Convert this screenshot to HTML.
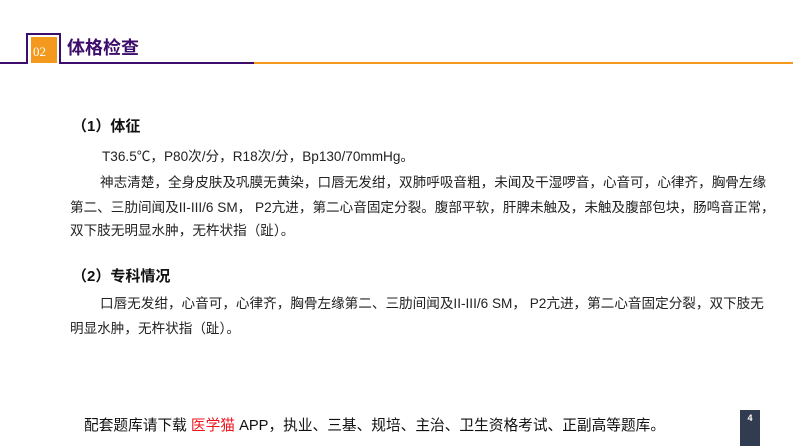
<!DOCTYPE html>
<html><head><meta charset="utf-8">
<style>
body{margin:0;width:793px;height:446px;background:#fff;position:relative;overflow:hidden;font-family:"Liberation Sans","Noto Sans CJK SC",sans-serif;color:#222;}
.a{position:absolute;white-space:nowrap;line-height:20px;}
.t{font-size:13.6px;}
.h{font-size:15px;font-weight:bold;color:#111;}
</style></head><body>
<div style="position:absolute;left:0;top:62px;width:254px;height:2px;background:#3d0d6b"></div>
<div style="position:absolute;left:254px;top:62px;width:539px;height:2px;background:#f39a1e"></div>
<div style="position:absolute;left:26px;top:33px;width:31px;height:29px;border:2px solid #3d0d6b;border-bottom:none;background:#fff"></div>
<div style="position:absolute;left:31px;top:37px;width:26px;height:26px;background:#f39a1e;color:#fff;font-family:'Liberation Serif',serif;font-size:13px;line-height:30px;text-align:left;padding-left:2px;box-sizing:border-box">02</div>
<div class="a" style="left:67px;top:37px;font-size:18px;font-weight:bold;color:#3d0d6b;line-height:22px">体格检查</div>

<div class="a h" style="left:72px;top:117px">（1）体征</div>
<div class="a t" style="left:102px;top:147px">T36.5℃，P80次/分，R18次/分，Bp130/70mmHg。</div>
<div class="a t" style="left:100px;top:173px">神志清楚，全身皮肤及巩膜无黄染，口唇无发绀，双肺呼吸音粗，未闻及干湿啰音，心音可，心律齐，胸骨左缘</div>
<div class="a t" style="left:70px;top:198px">第二、三肋间闻及II-III/6 SM， P2亢进，第二心音固定分裂。腹部平软，肝脾未触及，未触及腹部包块，肠鸣音正常，</div>
<div class="a t" style="left:70px;top:221px">双下肢无明显水肿，无杵状指（趾）。</div>

<div class="a h" style="left:72px;top:267px">（2）专科情况</div>
<div class="a t" style="left:100px;top:294px">口唇无发绀，心音可，心律齐，胸骨左缘第二、三肋间闻及II-III/6 SM， P2亢进，第二心音固定分裂，双下肢无</div>
<div class="a t" style="left:70px;top:319px">明显水肿，无杵状指（趾）。</div>

<div class="a" style="left:84px;top:416px;font-size:14.7px;color:#111">配套题库请下载 <span style="color:#f0141e">医学猫</span> APP，执业、三基、规培、主治、卫生资格考试、正副高等题库。</div>
<div style="position:absolute;left:740px;top:410px;width:20px;height:36px;background:#323c50;color:#fff;font-size:9px;text-align:center;line-height:16px;font-weight:bold">4</div>
</body></html>
